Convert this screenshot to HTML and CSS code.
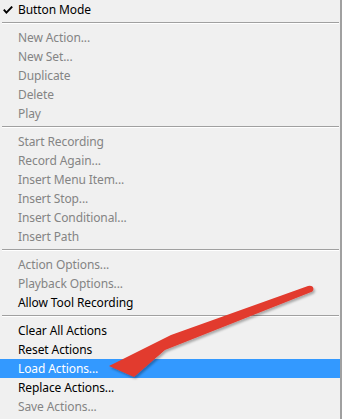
FILE: index.html
```html
<!DOCTYPE html>
<html lang="en">
<head>
  <meta charset="UTF-8">
  <title>Actions Menu</title>
  <link rel="stylesheet" href="styles.css">
</head>
<body>
  <div class="menu-wrap">
    <ul class="menu">
      <li class="menu-item checked">
        <svg class="check" width="10" height="8" viewBox="0 0 10 8">
          <path d="M0.8 3.6 L3.4 6.6 L9.2 0.6" fill="none" stroke="#000" stroke-width="1.9"/>
        </svg>
        Button Mode
      </li>
      <li class="menu-sep"></li>
      <li class="menu-item disabled">New Action...</li>
      <li class="menu-item disabled">New Set...</li>
      <li class="menu-item disabled">Duplicate</li>
      <li class="menu-item disabled">Delete</li>
      <li class="menu-item disabled">Play</li>
      <li class="menu-sep"></li>
      <li class="menu-item disabled">Start Recording</li>
      <li class="menu-item disabled">Record Again...</li>
      <li class="menu-item disabled">Insert Menu Item...</li>
      <li class="menu-item disabled">Insert Stop...</li>
      <li class="menu-item disabled">Insert Conditional...</li>
      <li class="menu-item disabled">Insert Path</li>
      <li class="menu-sep"></li>
      <li class="menu-item disabled">Action Options...</li>
      <li class="menu-item disabled">Playback Options...</li>
      <li class="menu-item">Allow Tool Recording</li>
      <li class="menu-sep"></li>
      <li class="menu-item">Clear All Actions</li>
      <li class="menu-item">Reset Actions</li>
      <li class="menu-item active">Load Actions...</li>
      <li class="menu-item">Replace Actions...</li>
      <li class="menu-item disabled">Save Actions...</li>
    </ul>

    <!-- annotation arrow drawn over the menu -->
    <svg class="arrow" width="342" height="419" viewBox="0 0 342 419">
      <defs>
        <filter id="shadow" x="-10%" y="-20%" width="130%" height="150%">
          <feDropShadow dx="1.5" dy="2" stdDeviation="1" flood-color="#000" flood-opacity="0.3"/>
        </filter>
      </defs>
      <path d="M109 366 L171 335 L308 286 Q313 285 313.5 289 Q313 292 310 292.5 L165 350 L134 377 Z"
            fill="#e23a2e" filter="url(#shadow)"/>
    </svg>
  </div>
</body>
</html>
```

FILE: styles.css
```css
body {
  margin: 0;
  background-color: #f0f0f0;
  font-family: "Noto Sans", "Open Sans", sans-serif;
  font-size: 12px;
  letter-spacing: -0.1px;
}

.menu-wrap {
  position: relative;
  width: 342px;
  height: 419px;
  overflow: hidden;
}

.menu {
  list-style: none;
  margin: 0;
  padding: 0 0 3px 0;
  width: 340px;
  border-right: 2px solid #a0a0a0;
  background-color: #f0f0f0;
}

.menu-item {
  position: relative;
  height: 19px;
  line-height: 19px;
  padding-left: 18px;
  color: #000;
  white-space: nowrap;
}

.menu-item.disabled {
  color: #848484;
}

.menu-item.active {
  background-color: #3399ff;
  color: #fff;
}

.check {
  position: absolute;
  left: 3px;
  top: 6px;
}

.menu-sep {
  height: 0;
  margin: 3px 1px 4px 2px;
  border-top: 1px solid #a0a0a0;
  border-bottom: 1px solid #fff;
}

.arrow {
  position: absolute;
  left: 0;
  top: 0;
  pointer-events: none;
}
```
